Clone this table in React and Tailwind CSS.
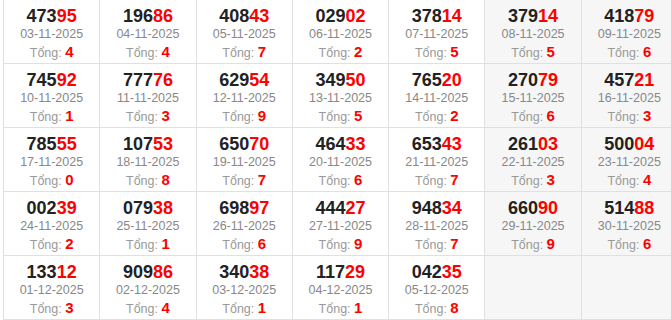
const RESULTS = [
  ['47395', '03-11-2025'], ['19686', '04-11-2025'], ['40843', '05-11-2025'], ['02902', '06-11-2025'],
  ['37814', '07-11-2025'], ['37914', '08-11-2025'], ['41879', '09-11-2025'],
  ['74592', '10-11-2025'], ['77776', '11-11-2025'], ['62954', '12-11-2025'], ['34950', '13-11-2025'],
  ['76520', '14-11-2025'], ['27079', '15-11-2025'], ['45721', '16-11-2025'],
  ['78555', '17-11-2025'], ['10753', '18-11-2025'], ['65070', '19-11-2025'], ['46433', '20-11-2025'],
  ['65343', '21-11-2025'], ['26103', '22-11-2025'], ['50004', '23-11-2025'],
  ['00239', '24-11-2025'], ['07938', '25-11-2025'], ['69897', '26-11-2025'], ['44427', '27-11-2025'],
  ['94834', '28-11-2025'], ['66090', '29-11-2025'], ['51488', '30-11-2025'],
  ['13312', '01-12-2025'], ['90986', '02-12-2025'], ['34038', '03-12-2025'], ['11729', '04-12-2025'],
  ['04235', '05-12-2025'], null, null,
];

function total(num) {
  return (Number(num[3]) + Number(num[4])) % 10;
}

export default function App() {
  return (
    <div className="w-[671px] h-[320px] overflow-hidden bg-white font-['Liberation_Sans',Arial,sans-serif]">
      <div className="ml-[3px] -mt-px w-[675px] grid grid-cols-7 border-l border-t border-[#e0e0e0]">
        {RESULTS.map((item, i) => {
          const weekend = i % 7 >= 5;
          return (
            <div
              key={i}
              className={`h-[64px] border-r border-b border-[#e0e0e0] flex flex-col items-center pt-[6px] ${weekend ? 'bg-[#f6f6f6]' : 'bg-white'}`}
            >
              {item && (
                <>
                  <p className="text-[18px] leading-[20px] font-bold text-[#222]">
                    {item[0].slice(0, 3)}
                    <span className="text-[#f00]">{item[0].slice(3)}</span>
                  </p>
                  <p className="text-[12.5px] leading-[17px] text-[#888]">{item[1]}</p>
                  <p className="text-[12.5px] leading-[17px] text-[#999]">
                    Tổng: <span className="text-[15px] font-bold text-[#f00]">{total(item[0])}</span>
                  </p>
                </>
              )}
            </div>
          );
        })}
      </div>
    </div>
  );
}
